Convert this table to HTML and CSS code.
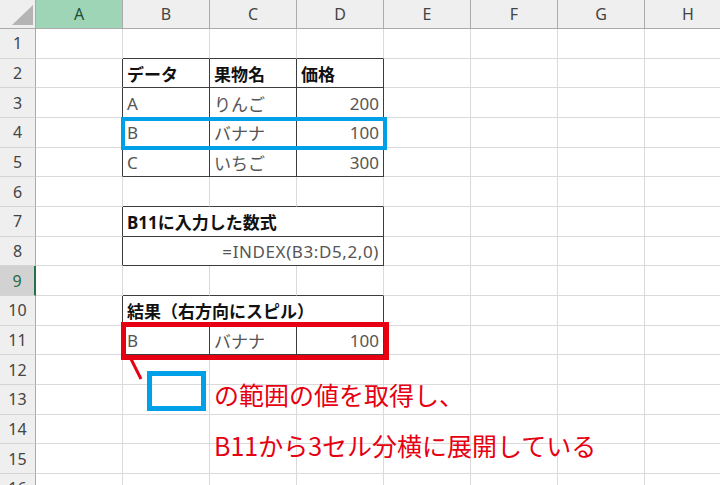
FILE: index.html
```html
<!DOCTYPE html>
<html lang="ja">
<head>
<meta charset="utf-8">
<title>INDEX spill</title>
<link rel="stylesheet" href="styles.css">
</head>
<body>
<div class="sheet">
  <div class="corner"><svg width="36" height="29" viewBox="0 0 36 29"><polygon points="12,25 33,5 33,25" fill="#b4b4b4"/></svg></div>
  <div class="ch sel">A</div><div class="ch">B</div><div class="ch">C</div><div class="ch">D</div><div class="ch">E</div><div class="ch">F</div><div class="ch">G</div><div class="ch last">H</div>

  <div class="rh">1</div><div class="c"></div><div class="c bb"></div><div class="c bb"></div><div class="c bb"></div><div class="c"></div><div class="c"></div><div class="c"></div><div class="c"></div>

  <div class="rh">2</div><div class="c br"></div><div class="c bx hd">データ</div><div class="c bx hd">果物名</div><div class="c bx hd">価格</div><div class="c"></div><div class="c"></div><div class="c"></div><div class="c"></div>

  <div class="rh">3</div><div class="c br"></div><div class="c bx">A</div><div class="c bx">りんご</div><div class="c bx num">200</div><div class="c"></div><div class="c"></div><div class="c"></div><div class="c"></div>

  <div class="rh">4</div><div class="c br"></div><div class="c bx">B</div><div class="c bx">バナナ</div><div class="c bx num">100</div><div class="c"></div><div class="c"></div><div class="c"></div><div class="c"></div>

  <div class="rh">5</div><div class="c br"></div><div class="c bx">C</div><div class="c bx">いちご</div><div class="c bx num">300</div><div class="c"></div><div class="c"></div><div class="c"></div><div class="c"></div>

  <div class="rh">6</div><div class="c"></div><div class="c bb"></div><div class="c bb"></div><div class="c bb"></div><div class="c"></div><div class="c"></div><div class="c"></div><div class="c"></div>

  <div class="rh">7</div><div class="c br"></div><div class="c bx hd span3">B11に入力した数式</div><div class="c"></div><div class="c"></div><div class="c"></div><div class="c"></div>

  <div class="rh">8</div><div class="c br"></div><div class="c bx num span3 formula">=INDEX(B3:D5,2,0)</div><div class="c"></div><div class="c"></div><div class="c"></div><div class="c"></div>

  <div class="rh selrow">9</div><div class="c"></div><div class="c bb"></div><div class="c bb"></div><div class="c bb"></div><div class="c"></div><div class="c"></div><div class="c"></div><div class="c"></div>

  <div class="rh">10</div><div class="c br"></div><div class="c bx hd span3">結果（右方向にスピル）</div><div class="c"></div><div class="c"></div><div class="c"></div><div class="c"></div>

  <div class="rh">11</div><div class="c br"></div><div class="c bx">B</div><div class="c bx">バナナ</div><div class="c bx num">100</div><div class="c"></div><div class="c"></div><div class="c"></div><div class="c"></div>

  <div class="rh">12</div><div class="c"></div><div class="c"></div><div class="c"></div><div class="c"></div><div class="c"></div><div class="c"></div><div class="c"></div><div class="c"></div>
  <div class="rh">13</div><div class="c"></div><div class="c"></div><div class="c"></div><div class="c"></div><div class="c"></div><div class="c"></div><div class="c"></div><div class="c"></div>
  <div class="rh">14</div><div class="c"></div><div class="c"></div><div class="c"></div><div class="c"></div><div class="c"></div><div class="c"></div><div class="c"></div><div class="c"></div>
  <div class="rh">15</div><div class="c"></div><div class="c"></div><div class="c"></div><div class="c"></div><div class="c"></div><div class="c"></div><div class="c"></div><div class="c"></div>
  <div class="rh">16</div><div class="c"></div><div class="c"></div><div class="c"></div><div class="c"></div><div class="c"></div><div class="c"></div><div class="c"></div><div class="c"></div>
</div>

<div class="hl-blue"></div>
<div class="hl-red"></div>
<svg class="pointer" width="16" height="26" viewBox="0 0 16 26"><line x1="3" y1="2" x2="13" y2="22" stroke="#e60012" stroke-width="3"/></svg>
<div class="legend-box"></div>
<div class="note">
  <div>の範囲の値を取得し、</div>
  <div>B11から3セル分横に展開している</div>
</div>
</body>
</html>
```

FILE: styles.css
```css
html, body {
  margin: 0;
  padding: 0;
  background: #fff;
}
body {
  position: relative;
  width: 720px;
  height: 485px;
  overflow: hidden;
  font-family: "Noto Sans CJK JP", "Noto Sans", sans-serif;
}
.sheet {
  display: grid;
  grid-template-columns: 36px repeat(8, 87px);
  grid-template-rows: 29px repeat(16, 29.67px);
  width: 732px;
}
.corner {
  background: #efefef;
  border-right: 1px solid #ababab;
  border-bottom: 1px solid #ababab;
  box-sizing: border-box;
}
.corner svg { display: block; }
.ch {
  background: #efefef;
  border-right: 1px solid #ababab;
  border-bottom: 1px solid #ababab;
  box-sizing: border-box;
  display: flex;
  align-items: center;
  justify-content: center;
  font-family: "Noto Sans", "Noto Sans CJK JP", sans-serif;
  font-size: 16px;
  color: #444;
}
.ch.sel {
  background: #9fd5b7;
  color: #1d4f33;
}
.rh {
  background: #efefef;
  border-right: 1px solid #ababab;
  border-bottom: 1px solid #d4d4d4;
  box-sizing: border-box;
  display: flex;
  align-items: center;
  justify-content: center;
  font-family: "Noto Sans", "Noto Sans CJK JP", sans-serif;
  font-size: 16px;
  color: #444;
}
.rh.selrow {
  background: #d2d2d2;
  border-right: 2px solid #217346;
  color: #1e6b41;
}
.c {
  background: #fff;
  border-right: 1px solid #dadada;
  border-bottom: 1px solid #dadada;
  box-sizing: border-box;
  display: flex;
  align-items: center;
  padding: 1px 4px 0 4px;
  white-space: nowrap;
  font-family: "Noto Sans", "Noto Sans CJK JP", sans-serif;
  font-size: 17px;
  color: #555;
  overflow: visible;
}
.c.br { border-right-color: #3c3c3c; }
.c.bb { border-bottom-color: #3c3c3c; }
.c.bx { border-right-color: #3c3c3c; border-bottom-color: #3c3c3c; }
.c.hd { font-weight: bold; color: #111; }
.c.num { justify-content: flex-end; }
.c.span3 { grid-column: span 3; }
.c.formula { letter-spacing: 0.6px; }

.hl-blue {
  position: absolute;
  left: 121px;
  top: 117px;
  width: 266px;
  height: 33px;
  border: 4px solid #00a0e9;
  box-sizing: border-box;
}
.hl-red {
  position: absolute;
  left: 121px;
  top: 322px;
  width: 268px;
  height: 38px;
  border: 5px solid #e60012;
  box-sizing: border-box;
}
.pointer {
  position: absolute;
  left: 128px;
  top: 357px;
}
.legend-box {
  position: absolute;
  left: 147px;
  top: 371px;
  width: 59px;
  height: 40px;
  border: 5px solid #00a0e9;
  box-sizing: border-box;
}
.note {
  position: absolute;
  left: 214px;
  top: 369px;
  font-size: 25px;
  line-height: 51px;
  color: #e60012;
  white-space: nowrap;
}
```
